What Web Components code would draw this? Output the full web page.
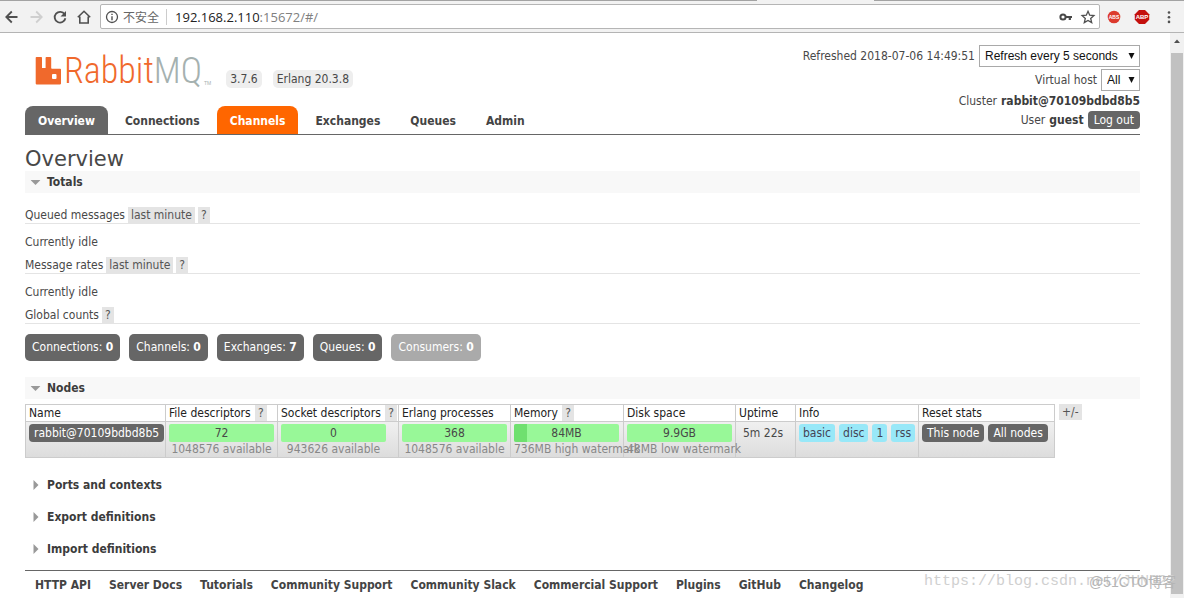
<!DOCTYPE html>
<html lang="en">
<head>
<meta charset="utf-8">
<title>RabbitMQ Management</title>
<style>
  html, body { margin: 0; height: 100%; }
  body {
    background: #fff;
    color: #484848;
    font: 12px/16px "DejaVu Sans Condensed", "DejaVu Sans", "Noto Sans CJK SC", sans-serif;
    overflow: hidden;
  }
</style>
</head>
<body>
<browser-window>
  <browser-toolbar slot="toolbar"></browser-toolbar>
  <site-header></site-header>
  <nav-tabs></nav-tabs>
  <page-title>Overview</page-title>
  <page-section heading="Totals" open>
    <stat-heading range="last minute">Queued messages</stat-heading>
    <idle-note>Currently idle</idle-note>
    <stat-heading range="last minute">Message rates</stat-heading>
    <idle-note>Currently idle</idle-note>
    <stat-heading>Global counts</stat-heading>
    <global-counts></global-counts>
  </page-section>
  <page-section heading="Nodes" open>
    <node-table></node-table>
  </page-section>
  <page-section heading="Ports and contexts"></page-section>
  <page-section heading="Export definitions"></page-section>
  <page-section heading="Import definitions"></page-section>
  <site-footer></site-footer>
  <water-mark slot="overlay"></water-mark>
</browser-window>

<script>
function define(name, render) {
  customElements.define(name, class extends HTMLElement {
    constructor() {
      super();
      this.attachShadow({ mode: 'open' });
    }
    connectedCallback() {
      this.shadowRoot.innerHTML = render(this);
    }
  });
}

define('browser-window', () => `
<style>
  :host { display: flex; flex-direction: column; height: 100vh; position: relative; }
  .view { flex: 1; min-height: 0; display: flex; }
  main { flex: 1; min-width: 0; overflow: hidden; padding: 12px 30px 0 25px; display: flex; flex-direction: column; }
  .scroll { width: 14px; box-sizing: border-box; background: #f1f1f1; padding: 5px 1px 4px; display: flex; flex-direction: column; align-items: center; gap: 9px; }
  .scroll svg { width: 8px; height: 6px; }
  .thumb { flex: 1; align-self: stretch; background: #c1c1c1; }
</style>
<slot name="toolbar"></slot>
<div class="view">
  <main><slot></slot></main>
  <div class="scroll"><svg viewBox="0 0 8 6"><path d="M1 5h6L4 1.500z" fill="#505050"/></svg><div class="thumb"></div></div>
</div>
<slot name="overlay"></slot>`);

define('browser-toolbar', () => `
<style>
  :host { display: block; background: #f2f2f2; border-bottom: 1px solid #b4b4b4; color: #5a5a5a; }
  .tabs { display: flex; height: 1px; }
  .tabs i { background: #a3a3a3; }
  .tabs i:first-child { flex: 757; }
  .tabs i:last-child { flex: 310; }
  .tabs b { flex: 117; }
  .bar { display: flex; align-items: center; padding: 3px 7px 3px 4px; }
  .nav { display: flex; gap: 8px; padding-right: 8px; }
  button { border: 0; padding: 0; margin: 0; background: none; color: inherit; display: block; width: 16px; height: 16px; }
  button svg { display: block; width: 16px; height: 16px; }
  .box { flex: 1; display: flex; align-items: center; height: 25px; box-sizing: border-box; border: 1px solid #b5b5b5; border-radius: 2px; background: #fff; padding: 0 3px 0 4px; }
  .info { width: 14px; height: 14px; margin-right: 4px; }
  .label { font: 12px/16px "Noto Sans CJK SC", sans-serif; color: #666; padding-right: 7px; border-right: 1px solid #ccc; margin-right: 8px; }
  .url { flex: 1; font: 13px/16px "Open Sans", "Noto Sans", sans-serif; color: #808080; }
  .url b { font-weight: 400; color: #222; }
  .key { margin-right: 6px; }
  .ext { margin-left: 6px; width: 16px; }
  .ext + .ext { margin-left: 12px; }
  .menu { margin-left: 11px; width: 16px; }
  text { font: bold 5px "Liberation Sans", sans-serif; fill: #fff; }
</style>
<div class="tabs"><i></i><b></b><i></i></div>
<div class="bar">
  <div class="nav">
    <button aria-label="Back"><svg viewBox="0 0 16 16" fill="none" stroke="#505050" stroke-width="1.800"><path d="M13.500 8H2.500M7.800 2.500 2.300 8l5.500 5.500"/></svg></button>
    <button aria-label="Forward"><svg viewBox="0 0 16 16" fill="none" stroke="#cfcfcf" stroke-width="1.800"><path d="M2.500 8h11M8.200 2.500 13.700 8l-5.500 5.500"/></svg></button>
    <button aria-label="Reload"><svg viewBox="0 0 16 16"><path d="M12.600 5.200A5.400 5.400 0 1 0 13.400 9.300" fill="none" stroke="#505050" stroke-width="1.800"/><path d="M14 2v5.500H8.500z" fill="#505050"/></svg></button>
    <button aria-label="Home"><svg viewBox="0 0 16 16" fill="none" stroke="#505050" stroke-width="1.600"><path d="M1.800 8.300 8 2.300l6.200 6M3.800 7.500v6.500h8.400V7.500"/></svg></button>
  </div>
  <div class="box">
    <svg class="info" viewBox="0 0 14 14"><circle cx="7" cy="7" r="5.500" fill="none" stroke="#505050" stroke-width="1.300"/><path d="M7 6.200v4M7 3.700v1.400" stroke="#505050" stroke-width="1.400"/></svg>
    <span class="label">不安全</span>
    <span class="url"><b>192.168.2.110</b>:15672/#/</span>
    <button class="key" aria-label="Saved password"><svg viewBox="0 0 16 16" fill="none" stroke="#484848"><circle cx="5" cy="8" r="2.600" stroke-width="2"/><path d="M7.500 8H14M11.800 8v3" stroke-width="2.200"/></svg></button>
    <button aria-label="Bookmark"><svg viewBox="0 0 16 16" fill="none" stroke="#505050" stroke-width="1.300"><path d="M8 2.300 9.700 6.200l4.200.4-3.200 2.800 1 4.200L8 11.400l-3.700 2.200 1-4.200L2.100 6.600l4.200-.4z"/></svg></button>
  </div>
  <button class="ext" aria-label="ABS"><svg viewBox="0 0 16 16"><circle cx="8" cy="8" r="6.300" fill="#dc3a2d"/><text x="8" y="10" text-anchor="middle">ABS</text></svg></button>
  <button class="ext" aria-label="ABP"><svg viewBox="0 0 16 16"><path d="M5 1h6l4.200 4.200v5.600L11 15H5L.8 10.800V5.200z" fill="#c4100d"/><text x="8" y="10" text-anchor="middle" style="font-size:6px">ABP</text></svg></button>
  <button class="menu" aria-label="Menu"><svg viewBox="0 0 16 16" fill="#505050"><circle cx="8" cy="3.500" r="1.300"/><circle cx="8" cy="8.200" r="1.300"/><circle cx="8" cy="12.900" r="1.300"/></svg></button>
</div>`);

define('drop-down', el => `
<style>
  :host { display: inline-block; position: relative; }
  select { appearance: none; display: block; box-sizing: border-box; height: 22px; margin: 0; padding: 0 18px 0 5px; border: 1px solid #a9a9a9; border-radius: 0; background: #fff; color: #111; font: 12px/16px "Liberation Sans", sans-serif; }
  :host([wide]) select { width: 161px; }
  svg { position: absolute; right: 5px; top: 8px; width: 7px; height: 6px; pointer-events: none; }
</style>
<select aria-label="${el.getAttribute('label')}"><option>${el.getAttribute('value')}</option></select>
<svg viewBox="0 0 7 6"><path d="M.5 0h6L3.500 6z" fill="#111"/></svg>`);

define('site-header', () => `
<style>
  :host { display: flex; justify-content: space-between; height: 61px; }
  .brand { display: flex; align-items: flex-end; height: 43px; padding-left: 10px; }
  .logo { display: flex; align-items: center; text-decoration: none; height: 34px; gap: 2px; font: 300 36px/34px "Roboto Condensed", "Open Sans Condensed", "Roboto", sans-serif; color: #f0692c; }
  .logo svg { width: 27px; height: 30px; }
  .logo span { color: #a5b1b0; }
  .logo small { align-self: flex-end; font: 5px/10px "Liberation Sans", sans-serif; color: #a5b1b0; }
  .logo em { font-style: normal; }
  .pill { background: #eee; border-radius: 5px; line-height: 18px; padding: 0 4px; margin-left: 11px; }
  .logo + .pill { margin-left: 15px; }
  .side { display: flex; flex-direction: column; align-items: flex-end; }
  .row { display: flex; align-items: center; gap: 4px; height: 22px; }
  .row + .row { margin-top: 2px; }
  .row.plain { height: 17px; }
  b { color: #3c3c3c; }
  button { border: 0; margin: 0; background: #666; color: #fff; border-radius: 4px; font: inherit; line-height: 18px; height: 18px; padding: 0 6px; }
</style>
<div class="brand">
  <a class="logo" href="#/"><svg viewBox="0 0 27 30"><path d="M1.500 1h4.700q.8 0 .8.800V12h3.600V1.800q0-.8.8-.8h4q.8 0 .8.800V12q0 .8.800.800h8.200q.8 0 .8.800v14q0 .8-.8.800H1.500q-.8 0-.8-.8V1.800q0-.8.800-.8z" fill="#f0692c"/><rect x="17" y="18" width="4.500" height="5" rx="1" fill="#fff"/></svg><em>Rabbit<span>MQ</span></em><small>TM</small></a>
  <span class="pill">3.7.6</span><span class="pill">Erlang 20.3.8</span>
</div>
<div class="side">
  <div class="row">Refreshed 2018-07-06 14:49:51 <drop-down wide label="Refresh" value="Refresh every 5 seconds"></drop-down></div>
  <div class="row">Virtual host <drop-down label="Virtual host" value="All"></drop-down></div>
  <div class="row plain">Cluster <b>rabbit@70109bdbd8b5</b></div>
  <div class="row plain">User <b>guest</b> <button>Log out</button></div>
</div>`);

define('nav-tabs', () => `
<style>
  :host { display: block; border-bottom: 1px solid #666; }
  nav { display: flex; gap: 4px; }
  a { color: #444; font-weight: bold; text-decoration: none; padding: 2px 13px 0; line-height: 26px; border-radius: 8px 8px 0 0; }
  .current { background: #666; color: #fff; }
  .hover { background: #f60; color: #fff; }
</style>
<nav><a class="current" href="#/">Overview</a><a href="#/connections">Connections</a><a class="hover" href="#/channels">Channels</a><a href="#/exchanges">Exchanges</a><a href="#/queues">Queues</a><a href="#/users">Admin</a></nav>`);

define('page-title', () => `
<style>
  :host { display: block; padding-top: 12px; }
  h1 { margin: 0; font-size: 21px; line-height: 24px; font-weight: 400; font-family: "DejaVu Sans", sans-serif; }
</style>
<h1><slot></slot></h1>`);

define('page-section', el => `
<style>
  :host { display: block; padding-bottom: 10px; }
  :host([open]) { padding-bottom: 16px; }
  h2 { margin: 0; font-size: 12px; line-height: 22px; }
  button { all: unset; display: flex; align-items: center; box-sizing: border-box; width: 100%; padding-left: 5px; gap: 6px; color: #3c3c3c; }
  :host([open]) button { background: #f8f8f8; }
  svg { width: 11px; height: 10px; }
  :host([open]) svg { transform: rotate(90deg); }
</style>
<h2><button><svg viewBox="0 0 11 10"><path d="M3.500 0v10L8.500 5z" fill="#999"/></svg>${el.getAttribute('heading')}</button></h2>
<slot></slot>`);

define('help-mark', () => `
<style>
  :host { display: inline-block; }
  button { border: 0; margin: 0; font: inherit; color: #555; background: #e4e4e4; height: 16px; line-height: 16px; padding: 0 3px; display: block; }
</style>
<button><slot>?</slot></button>`);

define('stat-heading', el => `
<style>
  :host { display: flex; gap: 3px; height: 16px; border-bottom: 1px solid #e4e4e4; padding-top: 7px; }
  :host(:first-child) { padding-top: 14px; }
</style>
<slot></slot>${el.hasAttribute('range') ? `<help-mark>${el.getAttribute('range')}</help-mark>` : ''}<help-mark></help-mark>`);

define('idle-note', () => `
<style>:host { display: block; padding-top: 10px; }</style>
<slot></slot>`);

define('global-counts', () => `
<style>
  :host { display: flex; gap: 9px; padding-top: 10px; }
  a { background: #666; color: #fff; text-decoration: none; border-radius: 5px; line-height: 27px; padding: 0 7px; }
  .off { background: #aaa; }
</style>
<a href="#/connections">Connections: <b>0</b></a><a href="#/channels">Channels: <b>0</b></a><a href="#/exchanges">Exchanges: <b>7</b></a><a href="#/queues">Queues: <b>0</b></a><a class="off" href="#/consumers">Consumers: <b>0</b></a>`);

define('usage-bar', el => `
<style>
  :host { display: block; width: 105px; white-space: nowrap; line-height: 14px; }
  .bar { display: grid; background: #98f898; border-radius: 2px; height: 18px; line-height: 18px; text-align: center; }
  .bar > * { grid-area: 1 / 1; }
  .fill { background: #6fe06f; width: 12%; border-radius: 2px 0 0 2px; }
  .sub { color: #888; text-align: center; }
</style>
<div class="bar">${el.hasAttribute('used') ? '<i class="fill"></i>' : ''}<span>${el.getAttribute('value')}</span></div>
<div class="sub"><slot></slot></div>`);

define('node-table', () => `
<style>
  :host { display: flex; align-items: flex-start; gap: 4px; padding-top: 5px; }
  table { border-collapse: collapse; table-layout: fixed; width: 1029px; }
  th, td { border: 1px solid #ccc; text-align: left; vertical-align: top; white-space: nowrap; }
  th { font-weight: 400; color: #222; padding: 0 0 0 3px; line-height: 16px; height: 16px; }
  th help-mark { margin-left: 1px; vertical-align: top; }
  tbody tr { background: linear-gradient(#f0f0f0, #dcdcdc); }
  td { padding: 2px 0 1px 3px; }
  td > div { display: flex; gap: 4px; line-height: 18px; }
  a, button { display: block; border: 0; margin: 0; height: 18px; font: inherit; line-height: 18px; background: #666; color: #fff; border-radius: 4px; text-decoration: none; padding: 0 5px; }
  .tag { background: #98e8f8; color: #445; padding: 0 4px; border-radius: 3px; }
</style>
<table>
  <colgroup><col style="width:140px"><col style="width:112px"><col style="width:121px"><col style="width:112px"><col style="width:113px"><col style="width:112px"><col style="width:60px"><col style="width:123px"><col style="width:136px"></colgroup>
  <thead><tr><th>Name</th><th>File descriptors <help-mark></help-mark></th><th>Socket descriptors <help-mark></help-mark></th><th>Erlang processes</th><th>Memory <help-mark></help-mark></th><th>Disk space</th><th>Uptime</th><th>Info</th><th>Reset stats</th></tr></thead>
  <tbody><tr>
    <td><div><a href="#/nodes">rabbit@70109bdbd8b5</a></div></td>
    <td><usage-bar value="72">1048576 available</usage-bar></td>
    <td><usage-bar value="0">943626 available</usage-bar></td>
    <td><usage-bar value="368">1048576 available</usage-bar></td>
    <td><usage-bar value="84MB" used>736MB high watermark</usage-bar></td>
    <td><usage-bar value="9.9GB">48MB low watermark</usage-bar></td>
    <td><div style="padding-left:4px">5m 22s</div></td>
    <td><div><span class="tag">basic</span><span class="tag">disc</span><span class="tag">1</span><span class="tag">rss</span></div></td>
    <td><div><button>This node</button><button>All nodes</button></div></td>
  </tr></tbody>
</table>
<help-mark>+/-</help-mark>`);

define('site-footer', () => `
<style>
  :host { display: flex; gap: 18px; border-top: 1px solid #666; padding: 6px 10px; }
  a { color: #444; font-weight: bold; text-decoration: none; }
</style>
${['HTTP API', 'Server Docs', 'Tutorials', 'Community Support', 'Community Slack', 'Commercial Support', 'Plugins', 'GitHub', 'Changelog'].map(t => `<a href="#">${t}</a>`).join('')}`);

define('water-mark', () => `
<style>
  :host { position: absolute; right: 8px; bottom: 6px; display: grid; justify-items: end; align-items: center; pointer-events: none; }
  span { grid-area: 1 / 1; font: 15px/20px "Liberation Mono", monospace; color: #d0d0d0; }
  .b { font: 14px/20px "Liberation Sans", "Noto Sans CJK SC", sans-serif; color: #b4b4b4; }
</style>
<span>https://blog.csdn.net/JUNO22</span><span class="b">@51CTO博客</span>`);
</script>
</body>
</html>
